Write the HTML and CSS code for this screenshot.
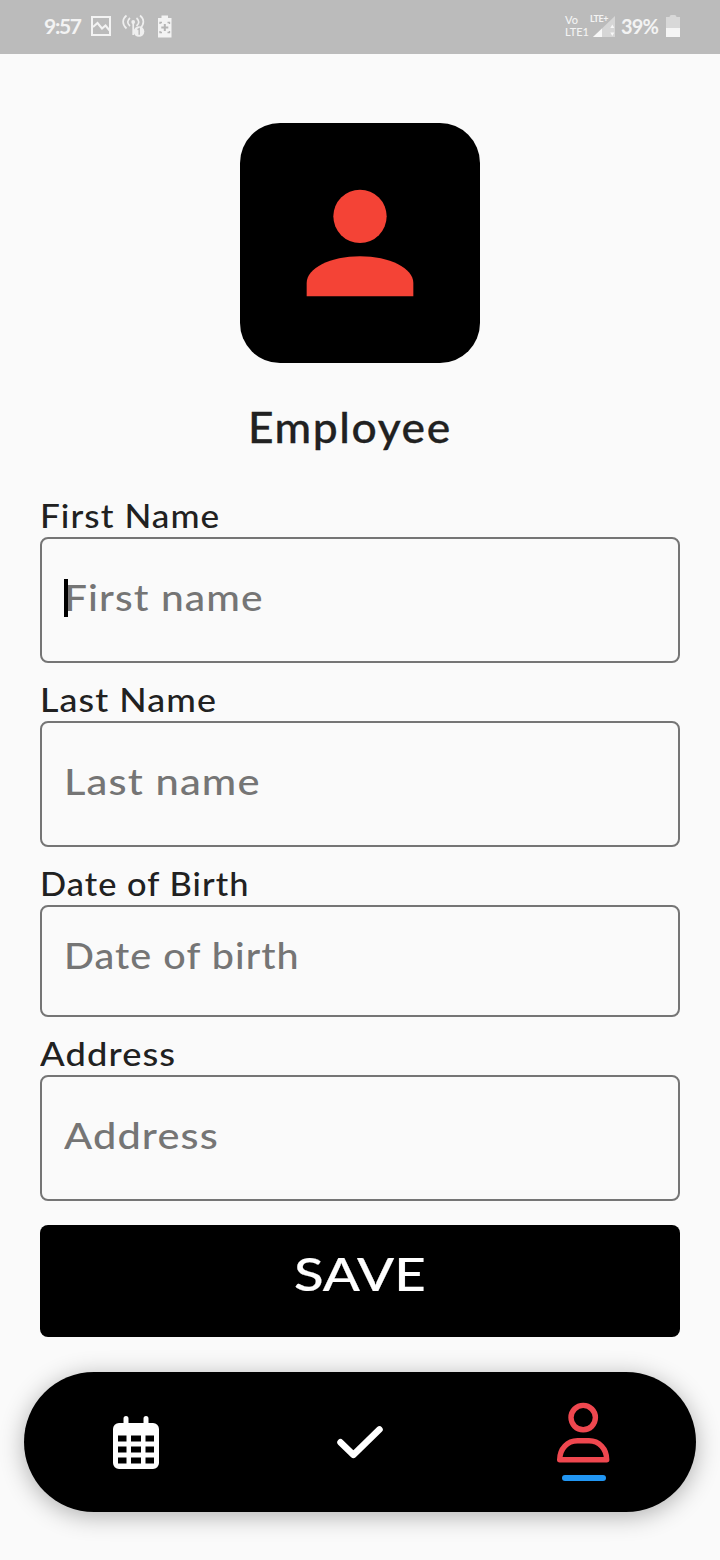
FILE: index.html
```html
<!DOCTYPE html>
<html lang="en">
<head>
<meta charset="utf-8">
<title>Employee</title>
<link rel="stylesheet" href="styles.css">
</head>
<body>
<div class="screen">
  <header class="status">
    <div class="status-left">
      <span class="clock">9:57</span>
      <svg class="ic-image" width="20" height="20" viewBox="0 0 20 20" fill="none" stroke="#f3f3f3" stroke-width="2"><rect x="1" y="1" width="18" height="18"/><path d="M2 11l4.500-4 4.500 5.500 3.500-3L19 15"/></svg>
      <svg class="ic-signal" width="23" height="24" viewBox="0 0 23 24" fill="none" stroke="#efefef" stroke-width="1.700"><path d="M4.500 1.500C0 5 0 10.500 4.500 14.500M8 4C5 6.500 5 9.500 8 12M14.500 4c3 2.500 3 5.500 0 8M18 1.500c4.500 3.500 4.500 9 0 13M11.200 8v13"/><circle cx="11.200" cy="8" r="1.900" fill="#efefef" stroke="none"/><circle cx="17" cy="17.500" r="5.300" fill="#efefef" stroke="none"/><path d="M15.500 15.700l1.700-1v6" stroke="#bbb" stroke-width="1.500"/></svg>
      <svg class="ic-saver" width="16" height="23" viewBox="0 0 16 23"><path fill="#f3f3f3" d="M1 3h3.500V.500h6.500V3h3.500v19.500H1z"/><path stroke="#b5b5b5" stroke-width="2" fill="none" d="M7.800 9v7M4.300 12.500h7"/><path stroke="#b5b5b5" stroke-width="1.300" fill="none" d="M3 9V7.500h2M10.500 7.500h2V9M3 16v1.500h2M10.500 17.500h2V16"/></svg>
    </div>
    <div class="status-right">
      <div class="volte"><span>Vo</span><span>LTE1</span></div>
      <div class="cell">
        <span class="cell-type">LTE+</span>
        <svg width="22" height="21" viewBox="0 0 22 21"><path d="M22 0v21H0z" fill="#d6d6d6"/><path d="M9 12.400V21H0z" fill="#f7f7f7"/><path d="M19.300 8.500l2 3.500h-4zM19.300 20l2-3.500h-4z" fill="#f7f7f7"/></svg>
      </div>
      <span class="percent">39%</span>
      <svg class="ic-battery" width="14" height="22" viewBox="0 0 14 22"><path fill="#d8d8d8" d="M0 2h3.500q0-2 2-2h3q2 0 2 2H14v11H0z"/><path fill="#f5f5f5" d="M0 13h14v9H0z"/></svg>
    </div>
  </header>

  <main class="content">
    <div class="avatar">
      <svg width="160" height="160" viewBox="0 0 24 24" fill="#f44336"><circle cx="12" cy="8" r="4"/><path d="M12 14c-4.420 0-8 1.790-8 4v2h16v-2c0-2.210-3.580-4-8-4z"/></svg>
    </div>
    <h1 class="title">Employee</h1>

    <div class="field">
      <div class="label l-first">First Name</div>
      <div class="box"><span class="hint h-first">First name</span><i class="caret"></i></div>
    </div>
    <div class="field">
      <div class="label l-last">Last Name</div>
      <div class="box"><span class="hint h-last">Last name</span></div>
    </div>
    <div class="field">
      <div class="label l-date">Date of Birth</div>
      <div class="box box-short"><span class="hint h-date">Date of birth</span></div>
    </div>
    <div class="field">
      <div class="label l-address">Address</div>
      <div class="box"><span class="hint h-address">Address</span></div>
    </div>
    <div class="save"><span class="save-text">SAVE</span></div>
  </main>

  <nav class="nav">
    <div class="nav-item">
      <svg width="46" height="54" viewBox="0 0 46 54"><path fill="#fff" d="M6 8h4.500V3.500a2.500 2.500 0 0 1 5 0V8h15V3.500a2.500 2.500 0 0 1 5 0V8H40a6 6 0 0 1 6 6v34a6 6 0 0 1-6 6H6a6 6 0 0 1-6-6V14a6 6 0 0 1 6-6z"/><path d="M5 20.500h8.500v6H5zM18 20.500h10v6H18zM32.500 20.500H41v6h-8.500zM5 31.500h8.500v6H5zM18 31.500h10v6H18zM32.500 31.500H41v6h-8.500zM5 42.500h8.500v6H5zM18 42.500h10v6H18zM32.500 42.500H41v6h-8.500z"/></svg>
    </div>
    <div class="nav-item">
      <svg width="48" height="36" viewBox="0 0 48 36" fill="none" stroke="#fff" stroke-width="6.500" stroke-linecap="round" stroke-linejoin="round"><path d="M4.500 18.300L17.400 30.800 43.500 5.400"/></svg>
    </div>
    <div class="nav-item profile">
      <svg width="54" height="62" viewBox="0 0 54 62" fill="none" stroke="#ef474f" stroke-width="5.400" stroke-linejoin="round"><circle cx="26.200" cy="15.600" r="12.200"/><path d="M2.700 57.800h47C49.700 46.500 42 38.800 32 38.800H20.500C10.500 38.800 2.700 46.500 2.700 57.800z"/></svg>
      <span class="active-bar"></span>
    </div>
  </nav>
</div>
</body>
</html>
```

FILE: styles.css
```css
* { box-sizing: border-box; }
body {
  margin: 0;
  background: #fafafa;
  font-family: Lato, "Open Sans", sans-serif;
  color: #212121;
}
.screen {
  width: 720px;
  height: 1560px;
  overflow: hidden;
  background: #fafafa;
}
.status {
  height: 54px;
  padding: 0 40px 2px 44px;
  background: #bbb;
  color: #f3f3f3;
  display: flex;
  justify-content: space-between;
  align-items: center;
  line-height: 1;
}
.status-left, .status-right { display: flex; align-items: center; }
.clock { width: 47px; padding-bottom: 2px; font-size: 21px; font-weight: 700; letter-spacing: -1.3px; }
.ic-signal { margin-left: 11px; }
.ic-saver { margin-left: 12px; }
.volte { display: flex; flex-direction: column; font-size: 11px; line-height: 12px; width: 26px; font-weight: 500; }
.cell { position: relative; width: 25px; height: 24px; padding: 2px 0 0 2px; }
.cell svg { display: block; }
.cell-type { position: absolute; left: -1px; top: 0; font-size: 9px; line-height: 9px; font-weight: 700; letter-spacing: -0.4px; white-space: nowrap; }
.percent { font-size: 20px; font-weight: 700; margin-left: 5px; width: 45px; letter-spacing: -0.8px; }
.content { padding: 69px 40px 0; }
.avatar {
  width: 240px;
  height: 240px;
  margin: 0 auto;
  border-radius: 40px;
  background: #000;
  display: grid;
  place-items: center;
}
.title, .label, .hint { transform-origin: 0 50%; }
.title {
  margin: 39px 0 0 208px;
  height: 95px;
  font-size: 42px;
  line-height: 50px;
  font-weight: 500;
  letter-spacing: 1.5px;
  transform: scaleX(1.056);
  -webkit-text-stroke: 0.3px currentColor;
}
.field + .field { margin-top: 18px; }
.label {
  width: fit-content;
  height: 40px;
  font-size: 33px;
  line-height: 36px;
  font-weight: 500;
  letter-spacing: 1px;
}
.l-first { transform: scaleX(1.065); }
.l-last { transform: scaleX(1.085); }
.l-date { transform: scaleX(1.042); }
.l-address { transform: scaleX(1.1); }
.box {
  position: relative;
  height: 126px;
  padding: 35px 22px 0;
  border: 2px solid #757575;
  border-radius: 8px;
}
.box-short { height: 112px; padding-top: 25px; }
.hint {
  display: block;
  width: fit-content;
  font-size: 37px;
  line-height: 45px;
  font-weight: 500;
  letter-spacing: 1px;
  color: #757575;
}
.h-first { transform: scaleX(1.1); }
.h-last { transform: scaleX(1.125); }
.h-date { transform: scaleX(1.067); }
.h-address { transform: scaleX(1.122); }
.caret { position: absolute; left: 22px; top: 40px; width: 4px; height: 38px; background: #000; }
.save {
  height: 112px;
  margin-top: 24px;
  padding-top: 20px;
  border-radius: 8px;
  background: #000;
  color: #fff;
  text-align: center;
  font-size: 47px;
  line-height: 56px;
  font-weight: 500;
}
.save-text { display: inline-block; transform: scaleX(1.16); -webkit-text-stroke: 0.2px #fff; }
.nav {
  height: 140px;
  margin: 35px 24px 0;
  border-radius: 70px;
  background: #000;
  box-shadow: 0 4px 24px rgba(0, 0, 0, .3);
  display: grid;
  grid-template-columns: repeat(3, 1fr);
}
.nav-item { display: flex; flex-direction: column; align-items: center; justify-content: center; }
.profile { justify-content: flex-start; padding-top: 30px; }
.active-bar { width: 44px; height: 6px; margin-top: 11px; border-radius: 3px; background: #2196f3; }
```
